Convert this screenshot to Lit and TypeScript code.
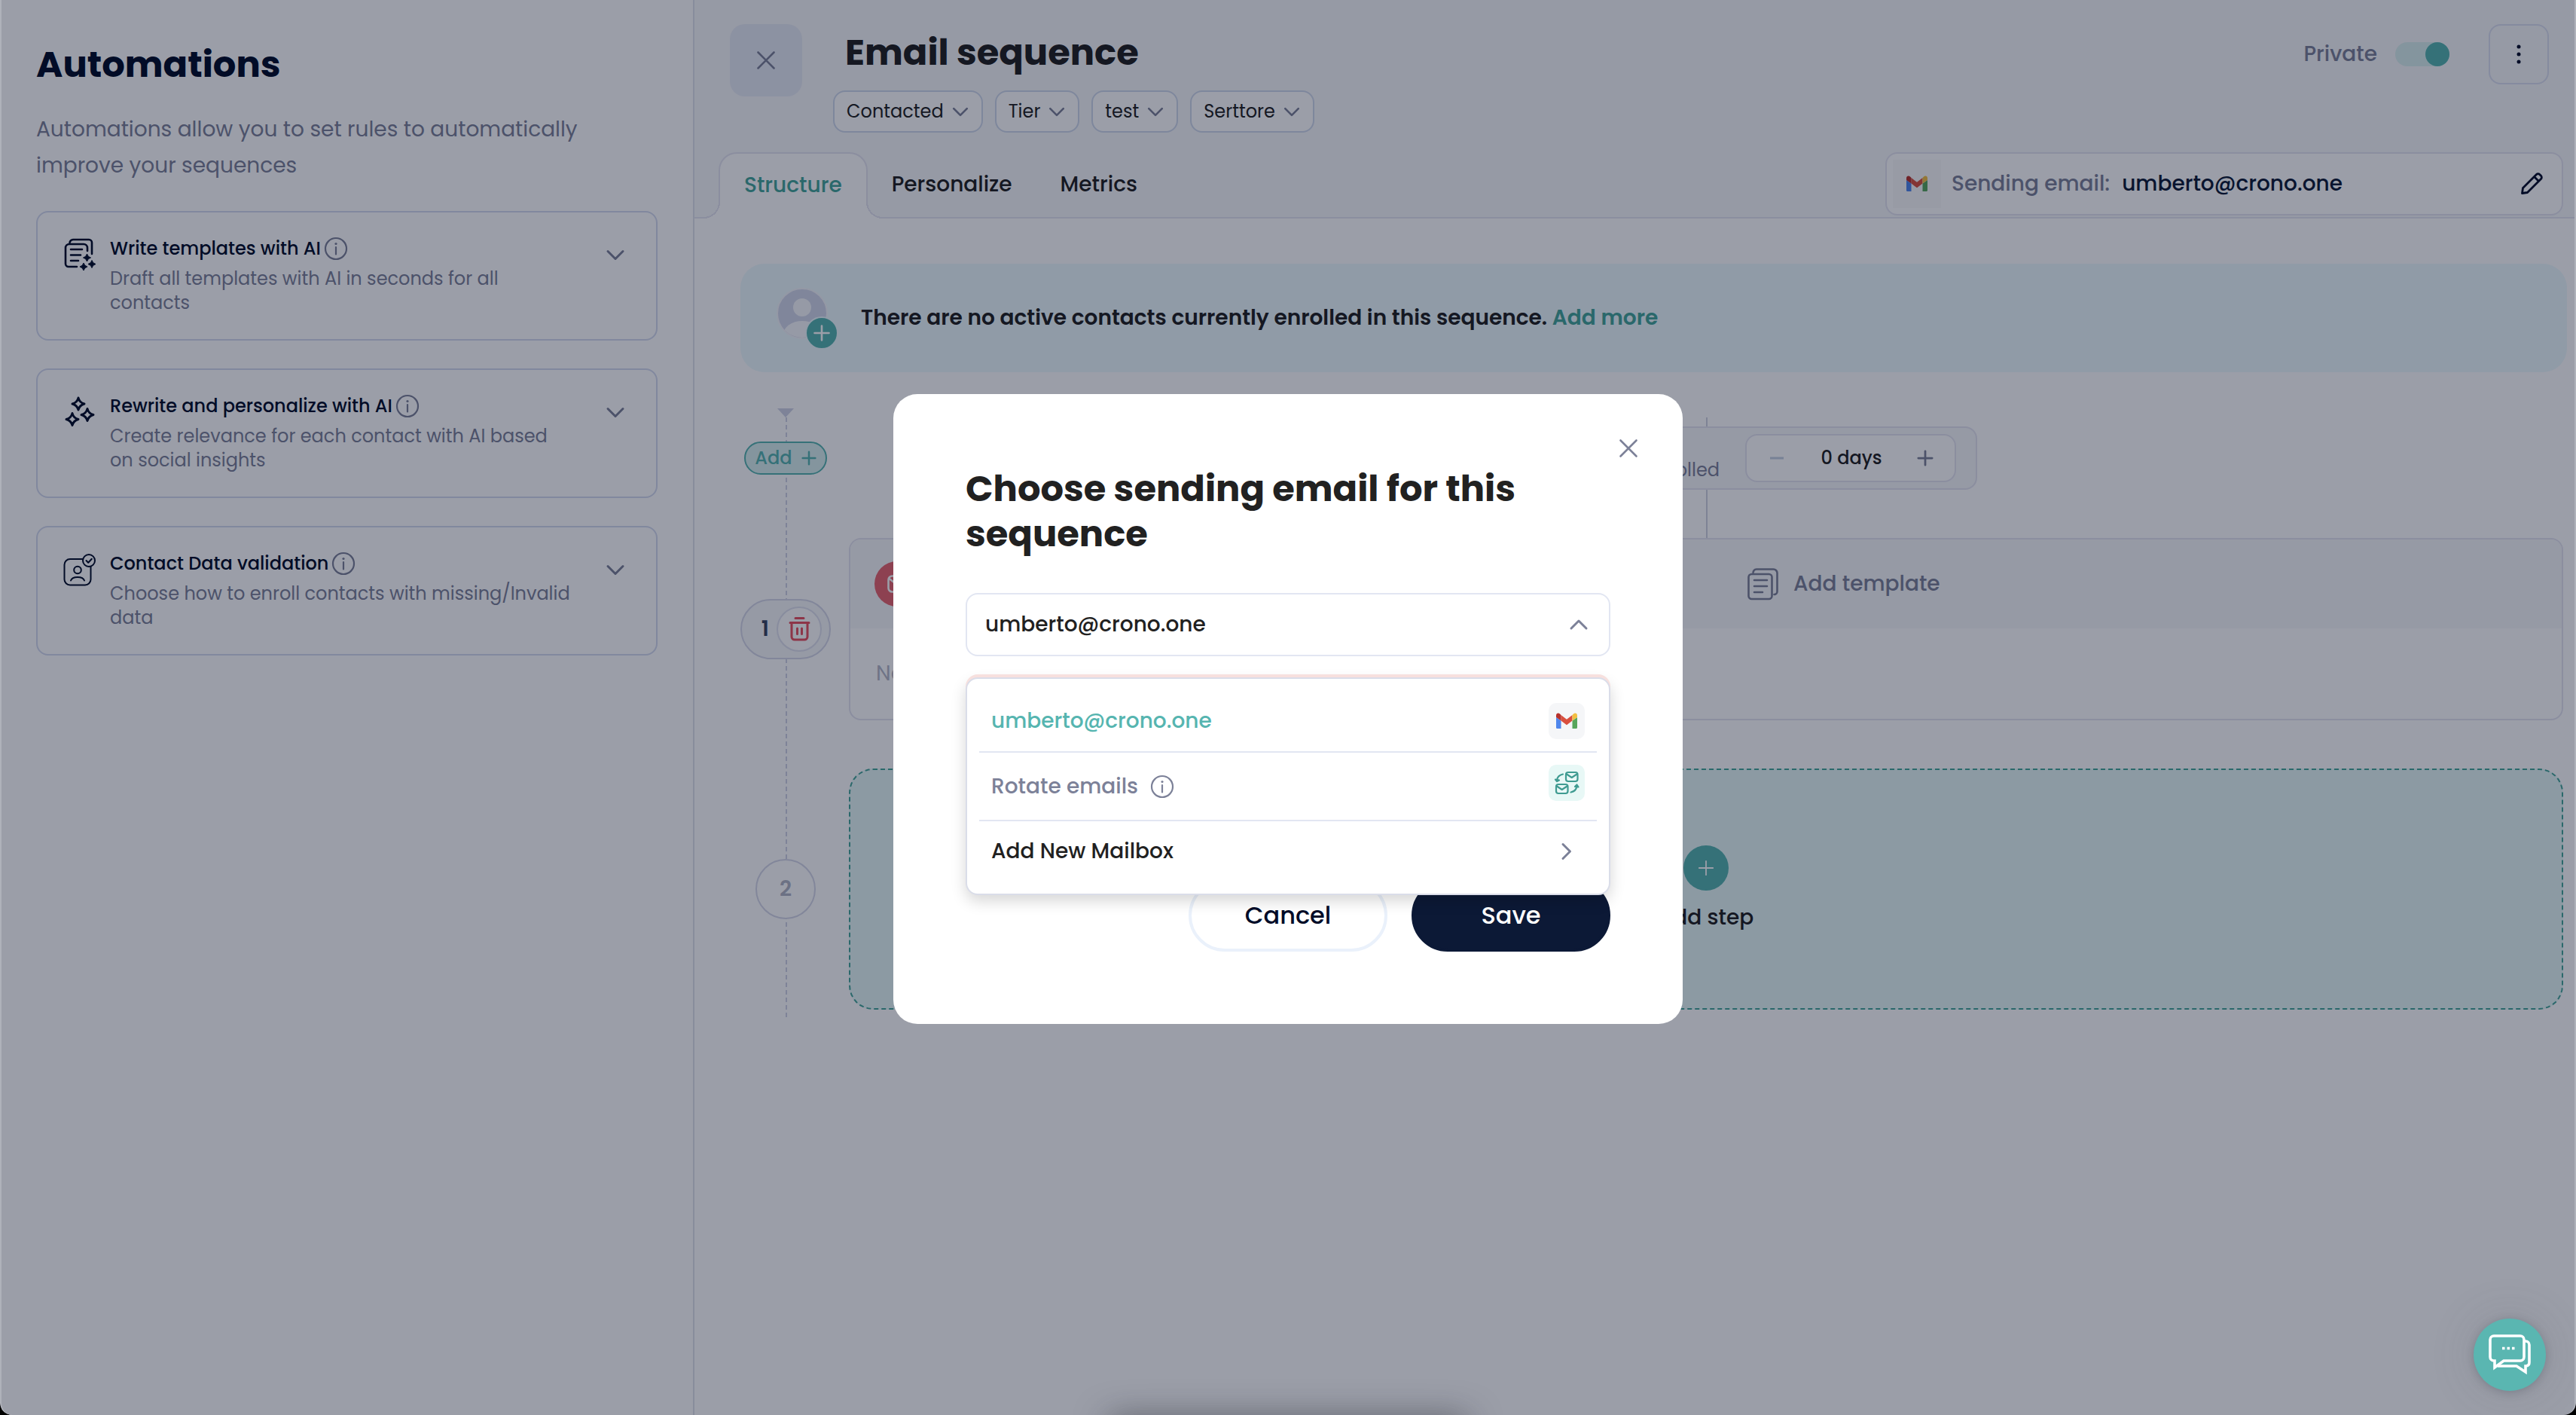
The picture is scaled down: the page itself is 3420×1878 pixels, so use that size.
import { LitElement, html, css, svg } from "lit";
import { customElement, property, state } from "lit/decorators.js";

const chevron = (dir: "down" | "up" | "right", size = 32) => {
  const d = {
    down: "M6 11.500 L16 21.500 L26 11.500",
    up: "M6 21 L16 11 L26 21",
    right: "M11 6.500 L20.500 16 L11 25.500",
  }[dir];
  return html`<svg class="icon" width=${size} height=${size} viewBox="0 0 32 32" aria-hidden="true">
    <path d=${d} fill="none" stroke="currentColor" stroke-width="3" stroke-linecap="round" stroke-linejoin="round" />
  </svg>`;
};

const cross = (size: number) => html`<svg class="icon" width=${size} height=${size} viewBox="0 0 24 24" aria-hidden="true">
  <path d="M1.500 1.500 L22.500 22.500 M22.500 1.500 L1.500 22.500" fill="none" stroke="currentColor" stroke-width="2.600" stroke-linecap="round" />
</svg>`;

const plus = (size: number, weight = 3) => html`<svg class="icon" width=${size} height=${size} viewBox="0 0 24 24" aria-hidden="true">
  <path d="M12 2 V22 M2 12 H22" fill="none" stroke="currentColor" stroke-width=${weight} stroke-linecap="round" />
</svg>`;

const info = html`<svg class="icon" width="32" height="32" viewBox="0 0 32 32" aria-hidden="true">
  <circle cx="16" cy="16" r="14" fill="none" stroke="currentColor" stroke-width="2.200" />
  <circle cx="16" cy="9.500" r="1.600" fill="currentColor" />
  <path d="M16 14 V23.500" stroke="currentColor" stroke-width="2.200" stroke-linecap="round" />
</svg>`;

const gmail = html`<svg class="icon" width="28" height="22" viewBox="0 0 28 22" aria-hidden="true">
  <path fill="#4f86ec" d="M0 6 L6.500 10.500 V21 H1.500 A1.500 1.500 0 0 1 0 19.500 Z" />
  <path fill="#58a65c" d="M28 6 L21.500 10.500 V21 H26.500 A1.500 1.500 0 0 0 28 19.500 Z" />
  <path fill="#d9503f" d="M6.500 3 L14 8.800 L21.500 3 V10.500 L14 16.200 L6.500 10.500 Z" />
  <path fill="#b7322c" d="M0 6 V3.500 C0 0.500 3 -0.300 5 1.500 L6.500 3 V10.500 Z" />
  <path fill="#f2bf42" d="M28 6 V3.500 C28 0.500 25 -0.300 23 1.500 L21.500 3 V10.500 Z" />
</svg>`;

const spark = (x: number, y: number, r: number, filled: boolean) => {
  const k = r * 0.2;
  const d = `M${x} ${y - r} Q${x + k} ${y - k} ${x + r} ${y} Q${x + k} ${y + k} ${x} ${y + r} Q${x - k} ${y + k} ${x - r} ${y} Q${x - k} ${y - k} ${x} ${y - r} Z`;
  return filled
    ? svg`<path d=${d} fill="currentColor" stroke="currentColor" stroke-width="1" stroke-linejoin="round" />`
    : svg`<path d=${d} fill="none" stroke="currentColor" stroke-width="3" stroke-linejoin="round" />`;
};

const templateIcon = html`<svg class="icon" width="48" height="48" viewBox="0 0 48 48" aria-hidden="true">
  <g fill="none" stroke="currentColor" stroke-width="2.600" stroke-linecap="round">
    <path d="M34 19 V15 A5 5 0 0 0 29 10 H10 A5 5 0 0 0 5 15 V36 A4 4 0 0 0 9 40 H20" />
    <path d="M10.500 8 A5 5 0 0 1 15 4 H36 A4 4 0 0 1 40 8 V23" />
    <path d="M12 17 H27 M12 24.500 H25 M12 32 H22" />
  </g>
  ${spark(33.5, 28, 5, true)}${spark(40, 36.5, 5, true)}${spark(29, 40, 5, true)}
</svg>`;

const sparklesIcon = html`<svg class="icon" width="48" height="48" viewBox="0 0 48 48" aria-hidden="true">
  ${spark(22, 13, 8, false)}${spark(34, 27.5, 8, false)}${spark(14, 33.5, 8, false)}
</svg>`;

const contactIcon = html`<svg class="icon" width="48" height="48" viewBox="0 0 48 48" aria-hidden="true">
  <g fill="none" stroke="currentColor" stroke-width="2" stroke-linecap="round" stroke-linejoin="round">
    <path d="M28 10 H11 A7.500 7.500 0 0 0 3.500 17.500 V37 A7.500 7.500 0 0 0 11 44.500 H31 A7.500 7.500 0 0 0 38.500 37 V20" />
    <circle cx="36" cy="12" r="8" />
    <path d="M32.500 12 L35.200 14.800 L39.800 9.800" />
    <circle cx="21" cy="24.500" r="4.800" />
    <path d="M12 38.500 C14 32.500 28 32.500 30 38.500" />
  </g>
</svg>`;

interface Automation {
  icon: unknown;
  title: string;
  text: string;
}

const AUTOMATIONS: Automation[] = [
  { icon: templateIcon, title: "Write templates with AI", text: "Draft all templates with AI in seconds for all contacts" },
  { icon: sparklesIcon, title: "Rewrite and personalize with AI", text: "Create relevance for each contact with AI based on social insights" },
  { icon: contactIcon, title: "Contact Data validation", text: "Choose how to enroll contacts with missing/Invalid data" },
];

const shared = css`
  :host {
    display: block;
    box-sizing: border-box;
    font-family: Poppins, Inter, "Open Sans", sans-serif;
    font-size: 28px;
    color: #212121;
  }
  *, *::before, *::after { box-sizing: border-box; }
  h1, h2, h3, p { margin: 0; }
  button, input {
    font: inherit;
    color: inherit;
    margin: 0;
    padding: 0;
    border: 0;
    background: none;
  }
  .icon { display: block; flex: none; overflow: visible; }
`;

@customElement("automations-panel")
export class AutomationsPanel extends LitElement {
  static styles = [shared, css`
    :host {
      flex: 0 0 920px;
      border-right: 2px solid #e0e3ec;
      padding: 56px 47px 0 46px;
      background: #ffffff;
    }
    h1 { font-size: 48px; line-height: 60px; font-weight: 700; color: #000c28; }
    .lead { margin-top: 32px; max-width: 740px; line-height: 48px; color: #7c8198; }
    .cards { display: flex; flex-direction: column; gap: 37px; margin-top: 36px; }
    .card {
      display: flex;
      align-items: flex-start;
      gap: 16px;
      padding: 32px 38px 32px 32px;
      border: 2px solid #d4daef;
      border-radius: 16px;
      font-size: 24px;
      line-height: 32px;
      text-align: left;
      color: #7c8198;
      width: 100%;
    }
    .body { flex: 1; display: flex; flex-direction: column; gap: 8px; }
    .title { display: flex; align-items: center; gap: 4px; }
    .name { color: #000c28; font-weight: 500; }
    .text { max-width: 614px; }
    .mark { color: #000c28; }
    .arrow { margin-top: 8px; }
  `];

  render() {
    return html`
      <h1>Automations</h1>
      <p class="lead">Automations allow you to set rules to automatically improve your sequences</p>
      <div class="cards">
        ${AUTOMATIONS.map((a) => html`
          <button class="card" type="button" aria-expanded="false">
            <span class="mark">${a.icon}</span>
            <span class="body">
              <span class="title"><span class="name">${a.title}</span>${info}</span>
              <span class="text">${a.text}</span>
            </span>
            <span class="arrow">${chevron("down")}</span>
          </button>`)}
      </div>`;
  }
}

@customElement("sequence-header")
export class SequenceHeader extends LitElement {
  @state() private isPrivate = true;

  static styles = [shared, css`
    :host { background: #f7f8fa; border-bottom: 2px solid #e5e5f1; }
    .top { display: flex; align-items: flex-start; padding: 32px 34px 0 47px; }
    .close {
      display: grid;
      place-items: center;
      width: 96px;
      height: 96px;
      border-radius: 20px;
      background: #e7ebf5;
      color: #7c8198;
    }
    .heading { flex: 1; padding: 8px 0 0 41px; }
    h2 { font-size: 48px; line-height: 60px; font-weight: 700; padding-left: 16px; }
    .chips { display: flex; gap: 16px; margin-top: 20px; }
    .chip {
      display: flex;
      align-items: center;
      gap: 8px;
      height: 56px;
      padding: 0 14px 0 16px;
      border: 2px solid #cfd9ec;
      border-radius: 16px;
      background: #ffffff;
      font-size: 24px;
      line-height: 32px;
    }
    .chip .icon { color: #7c8198; }
    .actions { display: flex; align-items: center; height: 80px; }
    .private { display: flex; align-items: center; gap: 24px; color: #7c8198; font-weight: 500; line-height: 40px; }
    .toggle {
      appearance: none;
      width: 72px;
      height: 32px;
      border-radius: 16px;
      background: #d9f0ee;
    }
    .toggle::before {
      content: "";
      display: block;
      width: 32px;
      height: 32px;
      border-radius: 50%;
      background: #9aa0b0;
    }
    .toggle:checked::before { margin-left: auto; background: #56b5b0; }
    .more {
      display: grid;
      place-items: center;
      width: 80px;
      height: 80px;
      margin-left: 52px;
      border: 2px solid #dadff0;
      border-radius: 16px;
      color: #000c28;
    }
    .bottom { display: flex; align-items: flex-start; padding: 0 15px 0 32px; margin-top: 26px; }
    .tabs { display: flex; flex: 1; height: 88px; margin-bottom: -2px; }
    .tab { padding: 0 32px 2px; font-weight: 500; line-height: 40px; }
    .tab.active {
      position: relative;
      color: #44a599;
      background: #ffffff;
      border: 2px solid #e5e5f1;
      border-bottom: 0;
      border-radius: 24px 24px 0 0;
    }
    .tab.active::before, .tab.active::after {
      content: "";
      position: absolute;
      bottom: 0;
      width: 22px;
      height: 22px;
    }
    .tab.active::before {
      left: -22px;
      background: radial-gradient(circle at 0 0, #f7f8fa 20px, #e5e5f1 20px 22px, #ffffff 22px);
    }
    .tab.active::after {
      right: -22px;
      background: radial-gradient(circle at 100% 0, #f7f8fa 20px, #e5e5f1 20px 22px, #ffffff 22px);
    }
    .sender {
      display: flex;
      align-items: center;
      flex: 0 1 900px;
      height: 84px;
      padding: 0 24px 0 8px;
      border: 2px solid #e5e5f1;
      border-radius: 16px;
      background: #ffffff;
      font-weight: 500;
      line-height: 40px;
    }
    .tile { display: grid; place-items: center; width: 64px; height: 64px; background: #fafafa; }
    .label { margin-left: 14px; color: #7c8198; }
    .address { flex: 1; margin-left: 16px; color: #0c1936; }
  `];

  render() {
    return html`
      <div class="top">
        <button class="close" type="button" aria-label="Close">${cross(24)}</button>
        <div class="heading">
          <h2>Email sequence</h2>
          <div class="chips">
            ${["Contacted", "Tier", "test", "Serttore"].map((c) => html`
              <button class="chip" type="button">${c}${chevron("down", 28)}</button>`)}
          </div>
        </div>
        <div class="actions">
          <label class="private">Private
            <input class="toggle" type="checkbox" .checked=${this.isPrivate}
              @change=${(e: Event) => { this.isPrivate = (e.target as HTMLInputElement).checked; }} />
          </label>
          <button class="more" type="button" aria-label="More options">
            <svg class="icon" width="8" height="28" viewBox="0 0 8 28" fill="currentColor" aria-hidden="true">
              <circle cx="4" cy="4" r="2.500" /><circle cx="4" cy="14" r="2.500" /><circle cx="4" cy="24" r="2.500" />
            </svg>
          </button>
        </div>
      </div>
      <div class="bottom">
        <div class="tabs" role="tablist">
          <button class="tab active" type="button" role="tab" aria-selected="true">Structure</button>
          <button class="tab" type="button" role="tab" aria-selected="false">Personalize</button>
          <button class="tab" type="button" role="tab" aria-selected="false">Metrics</button>
        </div>
        <div class="sender">
          <span class="tile">${gmail}</span>
          <span class="label">Sending email:</span>
          <span class="address">umberto@crono.one</span>
          <button type="button" aria-label="Edit sending email">
            <svg class="icon" width="32" height="32" viewBox="0 0 32 32" aria-hidden="true">
              <path d="M3.500 28.500 L4.500 21.500 L22.500 3.500 A3 3 0 0 1 26.700 3.500 L28.500 5.300 A3 3 0 0 1 28.500 9.500 L10.500 27.500 Z M19.500 6.500 L25.500 12.500"
                fill="none" stroke="#000c28" stroke-width="2.800" stroke-linejoin="round" />
            </svg>
          </button>
        </div>
      </div>`;
  }
}

@customElement("sequence-flow")
export class SequenceFlow extends LitElement {
  @property({ type: Number }) days = 0;

  static styles = [shared, css`
    :host { padding: 60px 10px 0 61px; }
    .banner {
      display: flex;
      align-items: center;
      gap: 32px;
      height: 144px;
      padding: 0 48px;
      border-radius: 32px;
      background: #edfafd;
      font-weight: 600;
      line-height: 40px;
    }
    .banner a { color: #44a599; text-decoration: none; }
    .flow {
      position: relative;
      display: grid;
      grid-template-columns: 120px 1fr;
      column-gap: 24px;
      margin: 48px 5px 0 0;
    }
    .flow::before {
      content: "";
      position: absolute;
      left: 60px;
      top: 12px;
      bottom: -10px;
      width: 2px;
      background: repeating-linear-gradient(#cfd3e4 0 6px, transparent 6px 10px);
    }
    .node { position: relative; display: grid; place-items: center; }
    .node.start { height: 132px; }
    .arrow {
      position: absolute;
      top: 0;
      left: 49px;
      border: 11px solid transparent;
      border-top: 12px solid #cfd3e4;
      border-bottom: 0;
    }
    .add {
      display: flex;
      align-items: center;
      gap: 12px;
      height: 44px;
      padding: 0 12px;
      border: 2px solid #56b5b0;
      border-radius: 22px;
      background: #d9f0ee;
      color: #56b5b0;
      font-size: 24px;
      font-weight: 500;
      line-height: 32px;
    }
    .count {
      display: flex;
      align-items: center;
      justify-content: flex-end;
      gap: 10px;
      width: 120px;
      height: 80px;
      padding-right: 10px;
      border: 2px solid #d5d8e8;
      border-radius: 40px;
      background: #f7f8fa;
      color: #3a4560;
      font-weight: 600;
    }
    .trash {
      display: grid;
      place-items: center;
      width: 60px;
      height: 60px;
      border: 2px solid #dfe2ee;
      border-radius: 50%;
      background: #ffffff;
    }
    .next {
      display: grid;
      place-items: center;
      width: 80px;
      height: 80px;
      border: 2px solid #d5d8e8;
      border-radius: 50%;
      background: #ffffff;
      color: #b1b4c4;
      font-weight: 600;
    }
    .start-line { position: relative; display: flex; justify-content: center; padding: 24px 0 64px; }
    .start-line::before {
      content: "";
      position: absolute;
      top: 12px;
      bottom: 0;
      left: 50%;
      width: 2px;
      background: #cfd3df;
    }
    .delay {
      position: relative;
      display: flex;
      align-items: center;
      justify-content: flex-end;
      gap: 34px;
      width: 720px;
      height: 84px;
      padding-right: 26px;
      border: 2px solid #e5e5f1;
      border-radius: 16px;
      background: #f7f8fa;
      font-size: 24px;
      line-height: 32px;
    }
    .hint { align-self: flex-end; margin-bottom: 8px; color: #7c8198; }
    .stepper {
      display: flex;
      align-items: center;
      justify-content: space-between;
      width: 280px;
      height: 64px;
      padding: 0 28px;
      border: 2px solid #e5e5f1;
      border-radius: 16px;
      background: #ffffff;
      font-weight: 500;
    }
    .minus { color: #c3cfe2; }
    .grow { color: #7c8198; }
    .step { border: 2px solid #e5e5f1; border-radius: 16px; overflow: hidden; line-height: 40px; }
    .head {
      display: grid;
      grid-template-columns: 1fr 1fr;
      align-items: center;
      height: 118px;
      background: #f7f8fa;
      color: #7c8198;
      font-weight: 500;
    }
    .mail {
      display: grid;
      place-items: center;
      width: 60px;
      height: 60px;
      margin-left: 32px;
      border-radius: 50%;
      background: #e8656f;
      color: #ffffff;
    }
    .template { display: flex; align-items: center; gap: 18px; margin-left: 54px; font-weight: inherit; }
    .empty { padding: 40px 34px; color: #b5b8c6; }
    .new {
      display: flex;
      flex-direction: column;
      align-items: center;
      justify-content: center;
      gap: 16px;
      height: 320px;
      margin-top: 64px;
      border: 2px dashed #44a599;
      border-radius: 32px;
      background: #e6f8f7;
      font-weight: 500;
      line-height: 40px;
    }
    .new .dot {
      display: grid;
      place-items: center;
      width: 60px;
      height: 60px;
      border-radius: 50%;
      background: #56b5b0;
      color: #ffffff;
    }
    .last { margin-top: 64px; }
  `];

  render() {
    return html`
      <div class="banner">
        <svg class="icon" width="80" height="80" viewBox="0 0 80 80" aria-hidden="true">
          <clipPath id="face"><circle cx="34" cy="34" r="32" /></clipPath>
          <circle cx="34" cy="34" r="33" fill="#d2d7ea" stroke="#f4f6fb" stroke-width="2" />
          <g clip-path="url(#face)" fill="#f7f8fc">
            <circle cx="34" cy="26" r="12" />
            <ellipse cx="34" cy="62" rx="25" ry="18" />
          </g>
          <circle cx="60" cy="60" r="21" fill="#56b5b0" stroke="#edfafd" stroke-width="2" />
          <path d="M60 50.500 V69.500 M50.500 60 H69.500" stroke="#ffffff" stroke-width="2.600" stroke-linecap="round" />
        </svg>
        <p>There are no active contacts currently enrolled in this sequence. <a href="#contacts">Add more</a></p>
      </div>
      <div class="flow">
        <div class="node start">
          <span class="arrow"></span>
          <button class="add" type="button">Add ${plus(20, 3)}</button>
        </div>
        <div class="start-line">
          <div class="delay">
            <span class="hint">enrolled</span>
            <div class="stepper">
              <button class="minus" type="button" aria-label="Fewer days">
                <svg class="icon" width="24" height="24" viewBox="0 0 24 24"><path d="M3 12 H21" stroke="currentColor" stroke-width="3" /></svg>
              </button>
              <span>${this.days} days</span>
              <button class="grow" type="button" aria-label="More days" @click=${() => { this.days += 1; }}>${plus(22, 3)}</button>
            </div>
          </div>
        </div>

        <div class="node">
          <div class="count">1
            <button class="trash" type="button" aria-label="Delete step">
              <svg class="icon" width="32" height="34" viewBox="0 0 32 34" fill="none" stroke="#e8505f" stroke-width="3" stroke-linecap="round" stroke-linejoin="round" aria-hidden="true">
                <path d="M11 2.500 H22 M4 8.500 H29 M6 8.500 V27 A4 4 0 0 0 10 31 H23 A4 4 0 0 0 27 27 V8.500 M13.500 16 V23.500 M19.500 16 V23.500" />
              </svg>
            </button>
          </div>
        </div>
        <div class="step">
          <div class="head">
            <span class="mail">
              <svg class="icon" width="26" height="24" viewBox="0 0 26 24" fill="none" stroke="currentColor" stroke-width="2.600" stroke-linejoin="round" aria-hidden="true">
                <rect x="1.500" y="1.500" width="23" height="21" rx="5" /><path d="M2.500 5 L13 13 L23.500 5" />
              </svg>
            </span>
            <button class="template" type="button">
              <svg class="icon" width="44" height="44" viewBox="0 0 44 44" fill="none" stroke="currentColor" stroke-width="2.600" stroke-linecap="round" aria-hidden="true">
                <rect x="2.500" y="9" width="31" height="33" rx="4" />
                <path d="M8.500 7 A5 5 0 0 1 13 2.500 H35.500 A5 5 0 0 1 40.500 7.500 V32 A4 4 0 0 1 36.500 36" />
                <path d="M10 17 H27 M10 25 H27 M10 33 H21" />
              </svg>
              Add template
            </button>
          </div>
          <p class="empty">No</p>
        </div>

        <div class="node last"><div class="next">2</div></div>
        <button class="new" type="button">
          <span class="dot">${plus(22, 2)}</span>
          Add step
        </button>
      </div>`;
  }
}

@customElement("sender-dialog")
export class SenderDialog extends LitElement {
  @state() private open = true;

  static styles = [shared, css`
    :host {
      position: fixed;
      inset: 0;
      display: flex;
      align-items: center;
      justify-content: center;
      padding-top: 4px;
      background: rgba(5, 12, 38, 0.4);
    }
    .dialog {
      position: relative;
      width: 1048px;
      max-width: 100%;
      padding: 96px;
      border-radius: 32px;
      background: #ffffff;
    }
    .close {
      position: absolute;
      top: 48px;
      right: 48px;
      display: grid;
      place-items: center;
      width: 48px;
      height: 48px;
      color: #7c8198;
    }
    h2 { font-size: 48px; line-height: 60px; font-weight: 700; }
    .field { position: relative; margin-top: 48px; }
    .select {
      display: flex;
      align-items: center;
      justify-content: space-between;
      width: 100%;
      height: 84px;
      padding: 0 24px;
      border: 2px solid #e2e6f2;
      border-radius: 16px;
      font-weight: 500;
      line-height: 40px;
    }
    .select .icon { color: #7c8198; }
    .menu {
      position: absolute;
      top: 112px;
      left: 0;
      right: 0;
      padding: 16px;
      border: 2px solid #dadde9;
      border-radius: 16px;
      background: #ffffff;
      box-shadow: 0 -4px 0 #f7e0de, 0 8px 20px rgba(0, 0, 0, 0.16);
      z-index: 1;
    }
    .option {
      display: flex;
      align-items: center;
      width: 100%;
      height: 80px;
      padding: 0 16px;
      font-weight: 500;
      line-height: 40px;
    }
    .option + .option { border-top: 2px solid #e2e6f2; height: 82px; }
    .option.rotate { height: 91px; gap: 16px; color: #7c8198; }
    .option .end { margin-left: auto; }
    .tile { display: grid; place-items: center; width: 48px; height: 48px; border-radius: 10px; background: #f5f6f8; }
    .tile.green { align-self: flex-start; margin-top: 16px; background: #e8f8f6; }
    .current { color: #56b5b0; }
    .mailbox .icon { margin-right: 8px; color: #7c8198; }
    .actions { display: flex; justify-content: flex-end; gap: 32px; margin-top: 296px; }
    .action {
      width: 264px;
      height: 96px;
      border: 4px solid #eaf1fb;
      border-radius: 48px;
      font-size: 32px;
      font-weight: 500;
      line-height: 40px;
      color: #000c28;
      background: #ffffff;
    }
    .action.save { border-color: #0c1936; background: #0c1936; color: #ffffff; }
  `];

  render() {
    return html`
      <div class="dialog" role="dialog" aria-modal="true" aria-labelledby="dialog-title">
        <button class="close" type="button" aria-label="Close dialog">${cross(24)}</button>
        <h2 id="dialog-title">Choose sending email for this sequence</h2>
        <div class="field">
          <button class="select" type="button" aria-haspopup="listbox" aria-expanded=${this.open ? "true" : "false"}
            @click=${() => { this.open = !this.open; }}>
            umberto@crono.one ${chevron(this.open ? "up" : "down")}
          </button>
          ${this.open ? html`
            <div class="menu">
              <button class="option current" type="button">umberto@crono.one<span class="tile end">${gmail}</span></button>
              <button class="option rotate" type="button">Rotate emails ${info}
                <span class="tile green end">
                  <svg class="icon" width="36" height="36" viewBox="0 0 36 36" fill="none" stroke="#3f9b91" stroke-width="2.200" stroke-linecap="round" stroke-linejoin="round" aria-hidden="true">
                    <rect x="17" y="4" width="15.500" height="12" rx="3" />
                    <path d="M18 6.500 L24.700 11 L31.500 6.500" />
                    <rect x="4" y="20" width="15.500" height="12" rx="3" />
                    <path d="M5 22.500 L11.700 27 L18.500 22.500" />
                    <path d="M13 6.500 C8 7.500 5.500 10.500 5 14.500 M3 13.500 L5 16 L8 14.500 Z" />
                    <path d="M23.500 30.500 C28.500 29.500 31 26 31.500 22 M29 23 L31.500 20.500 L33.500 23.500 Z" />
                  </svg>
                </span>
              </button>
              <button class="option mailbox" type="button">Add New Mailbox<span class="end">${chevron("right")}</span></button>
            </div>` : null}
        </div>
        <div class="actions">
          <button class="action" type="button">Cancel</button>
          <button class="action save" type="button">Save</button>
        </div>
      </div>`;
  }
}

@customElement("app-root")
export class AppRoot extends LitElement {
  static styles = [shared, css`
    :host { position: relative; background: #000000; }
    .window {
      display: flex;
      position: relative;
      min-height: 100vh;
      border-radius: 0 0 16px 16px;
      overflow: hidden;
      background: #ffffff;
      clip-path: inset(0 round 0 0 16px 16px);
    }
    .main { flex: 1; min-width: 0; padding-right: 2px; }
    .edge {
      position: absolute;
      inset: 0;
      z-index: 2;
      border: 2px solid rgba(255, 255, 255, 0.2);
      border-width: 0 2px;
      border-radius: 0 0 16px 16px;
      pointer-events: none;
    }
    .dock {
      position: absolute;
      left: 50%;
      bottom: -34px;
      z-index: 2;
      width: 480px;
      height: 30px;
      margin-left: -240px;
      border-radius: 15px;
      box-shadow: 0 0 44px rgba(30, 30, 40, 0.55);
    }
    .chat {
      position: absolute;
      right: 40px;
      bottom: 32px;
      z-index: 2;
      display: grid;
      place-items: center;
      width: 96px;
      height: 96px;
      border-radius: 50%;
      background: #5ab6b1;
      box-shadow: 0 2px 12px rgba(30, 35, 60, 0.22), 0 0 60px rgba(90, 90, 90, 0.18);
    }
    .panel { padding-left: 2px; display: flex; }
  `];

  render() {
    return html`
      <div class="window">
        <div class="panel"><automations-panel></automations-panel></div>
        <main class="main">
          <sequence-header></sequence-header>
          <sequence-flow></sequence-flow>
        </main>
        <sender-dialog></sender-dialog>
        <button class="chat" type="button" aria-label="Open chat">
          <svg class="icon" width="60" height="56" viewBox="0 0 60 56" fill="none" stroke="#ffffff" stroke-width="3.600" stroke-linejoin="miter" aria-hidden="true">
            <path d="M9 3 H44 A5 5 0 0 1 49 8 V31 A5 5 0 0 1 44 36 H22 L10 45 V36 H9 A5 5 0 0 1 4 31 V8 A5 5 0 0 1 9 3 Z" />
            <path d="M49 10 H51 A5 5 0 0 1 56 15 V38 A5 5 0 0 1 52 43 H51 V51 L39 43 H14" />
            <path d="M20 19.500 H23.500 M26.500 19.500 H30 M33 19.500 H36.500" />
          </svg>
        </button>
        <div class="dock"></div>
        <div class="edge"></div>
      </div>`;
  }
}
